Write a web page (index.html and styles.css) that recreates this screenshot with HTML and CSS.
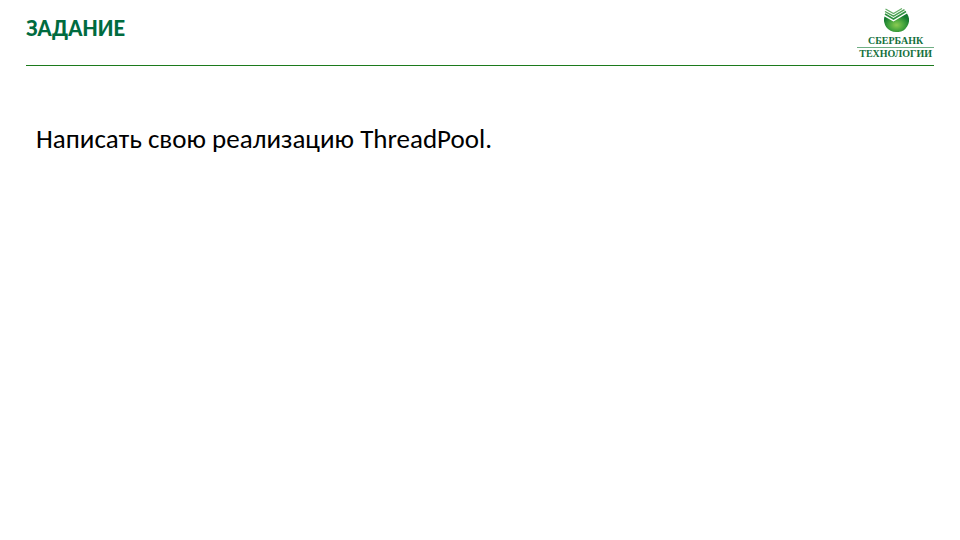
FILE: index.html
```html
<!DOCTYPE html>
<html lang="ru">
<head>
<meta charset="utf-8">
<title>Задание</title>
<link rel="stylesheet" href="styles.css">
</head>
<body>
<header class="header">
  <h1 class="title">ЗАДАНИЕ</h1>
  <div class="brand">
    <svg class="brand-mark" viewBox="0 0 26 24" aria-hidden="true">
      <defs>
        <radialGradient id="ball" cx="0.5" cy="0.62" r="0.55">
          <stop offset="0" stop-color="#8ccb52"/>
          <stop offset="0.55" stop-color="#45a53d"/>
          <stop offset="1" stop-color="#147a30"/>
        </radialGradient>
      </defs>
      <path d="M1.5 8.5 L10.5 13.5 L24 5.5 A12 12 0 0 1 13 24 A12 12 0 0 1 1.5 8.5 Z" fill="url(#ball)"/>
      <path d="M2 6 L10.5 11 L23 3.5" fill="none" stroke="#2f9140" stroke-width="1.6"/>
      <path d="M2 3.5 L10.5 8.2 L21.5 1.7" fill="none" stroke="#4aa050" stroke-width="1.4"/>
      <path d="M2.5 1 L10.5 5.5 L19 0.6" fill="none" stroke="#65ae68" stroke-width="1.2"/>
    </svg>
    <span class="brand-name">СБЕРБАНК</span>
    <span class="brand-unit">ТЕХНОЛОГИИ</span>
  </div>
</header>
<main class="content">
  <p class="task">Написать свою реализацию ThreadPool.</p>
</main>
</body>
</html>
```
FILE: styles.css
```css
body {
  margin: 0;
  background: #fff;
  font-family: Carlito, Lato, "Open Sans", sans-serif;
}
.header {
  display: flex;
  justify-content: space-between;
  margin: 0 26px;
  padding-top: 8px;
  height: 57px;
  border-bottom: 1px solid #1c7a1c;
}
.title {
  margin: 7px 0 0;
  font-size: 24px;
  line-height: 26px;
  color: #006b3f;
}
.brand {
  display: flex;
  flex-direction: column;
  align-items: center;
  color: #14703c;
  font-family: "Liberation Serif", serif;
  font-size: 10px;
  line-height: 12px;
  font-weight: 700;
}
.brand-mark {
  width: 26px;
  height: 24px;
  margin-bottom: 3px;
}
.brand-unit {
  padding: 0 2px;
  border-top: 1px solid #6fae84;
}
.content {
  padding: 57px 36px;
}
.task {
  margin: 0;
  font-size: 27px;
  line-height: 32px;
  color: #000;
}
```
